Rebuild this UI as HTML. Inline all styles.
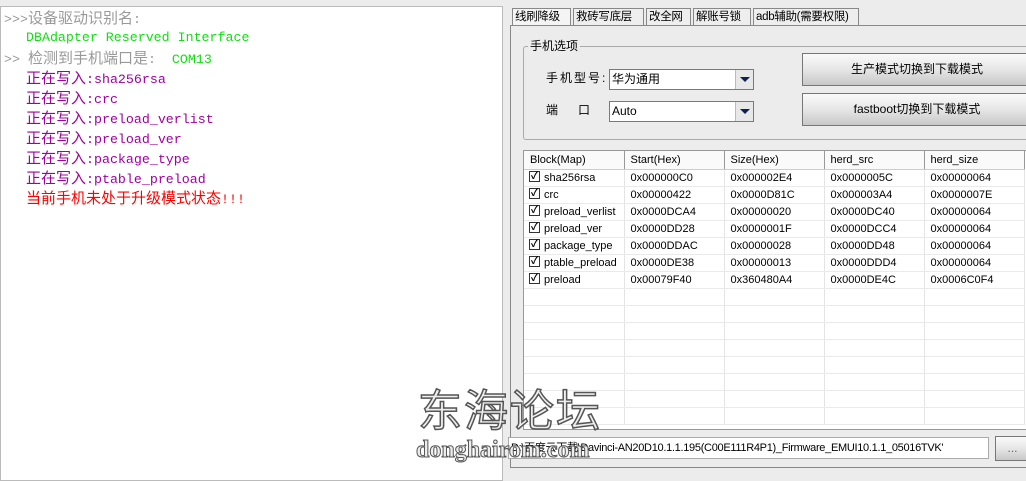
<!DOCTYPE html>
<html><head><meta charset="utf-8"><style>
*{margin:0;padding:0;box-sizing:border-box}
body{width:1026px;height:481px;overflow:hidden;background:#ececec;position:relative;font-family:"Liberation Sans","Noto Sans CJK SC",sans-serif;font-size:12px;color:#000}
.abs{position:absolute}
#left{left:0;top:6px;width:503px;height:475px;background:#fff;border:1px solid #bbb;font-family:"Liberation Mono","Noto Sans CJK SC",monospace;font-size:13.3px}
#left div{position:absolute;left:25px;white-space:pre;line-height:20px}
#left i{font-style:normal;font-size:15px;font-family:"Noto Sans CJK SC",sans-serif}
.g{color:#999}.gr{color:#10e010}.p{color:#a000a0}.r{color:#f00}
.tab{top:8px;height:18px;border:1px solid #888;border-bottom:none;background:#eee;font-size:11.5px;line-height:16px;padding:0 2px;white-space:nowrap;overflow:hidden;letter-spacing:-0.3px}
.box{border:1px solid #aaa}
.sel{height:21px;background:#fff;border:1px solid #7a7a7a;font-size:12px;line-height:19px;padding-left:2px}
.arr{position:absolute;right:0;top:0;width:18px;height:19px;background:#e8e8e8;border-left:1px solid #bbb}
.arr:after{content:"";position:absolute;left:4px;top:7px;border-left:5px solid transparent;border-right:5px solid transparent;border-top:5px solid #102050}
.btn{border:1px solid #777;background:linear-gradient(#fafafa,#e6e6e6 50%,#c8c8c8);text-align:center;font-size:12px}
table{border-collapse:collapse;font-size:11px;table-layout:fixed;width:500px}
td,th{height:17px;width:100px;font-weight:normal;text-align:left;padding-left:6px;border-right:1px solid #e4e4e4;border-bottom:1px solid #eaeaea;white-space:nowrap;overflow:hidden;line-height:16px;vertical-align:middle}
th{background:#fafafa;border-right:1px solid #999;border-bottom:1px solid #ccc;height:18px}
td:first-child{padding-left:5px}
.cb{display:inline-block;width:11px;height:11px;border:1px solid #333;vertical-align:middle;margin:-2px 4px 0 0;font-size:10px;line-height:9px;text-align:center;font-weight:bold}
</style></head><body>
<div id="left" class="abs">
<div class="g" style="top:1px;left:3px">&gt;&gt;&gt;<i>设备驱动识别名</i>:</div>
<div class="gr" style="top:21px">DBAdapter Reserved Interface</div>
<div class="g" style="top:41px;left:3px">&gt;&gt; <i>检测到手机端口是</i>:  <span class="gr">COM13</span></div>
<div class="p" style="top:61px"><i>正在写入</i>:sha256rsa</div>
<div class="p" style="top:81px"><i>正在写入</i>:crc</div>
<div class="p" style="top:101px"><i>正在写入</i>:preload_verlist</div>
<div class="p" style="top:121px"><i>正在写入</i>:preload_ver</div>
<div class="p" style="top:141px"><i>正在写入</i>:package_type</div>
<div class="p" style="top:161px"><i>正在写入</i>:ptable_preload</div>
<div class="r" style="top:181px"><i>当前手机未处于升级模式状态</i>!!!</div>
</div>

<div class="abs tab" style="left:512px;width:59px;background:#f4f4f4">线刷降级</div>
<div class="abs tab" style="left:573px;width:71px">救砖写底层</div>
<div class="abs tab" style="left:646px;width:45px">改全网</div>
<div class="abs tab" style="left:693px;width:58px">解账号锁</div>
<div class="abs tab" style="left:753px;width:106px">adb辅助(需要权限)</div>
<div class="abs" style="left:510px;top:25px;width:520px;height:443px;border:1px solid #888;border-right:none"></div>

<div class="abs box" style="left:523px;top:46px;width:510px;height:94px;border-radius:3px"></div>
<div class="abs" style="left:528px;top:37px;background:#ececec;padding:0 2px;font-size:12px">手机选项</div>
<div class="abs" style="left:546px;top:69px;font-size:12px;letter-spacing:2px">手机型号:</div>
<div class="abs sel" style="left:609px;top:69px;width:145px">华为通用<div class="arr"></div></div>
<div class="abs" style="left:546px;top:101px;font-size:12px">端&nbsp;&nbsp;&nbsp;&nbsp;&nbsp;&nbsp;口</div>
<div class="abs sel" style="left:609px;top:101px;width:145px">Auto<div class="arr"></div></div>
<div class="abs btn" style="left:802px;top:53px;width:230px;height:33px;line-height:31px">生产模式切换到下载模式</div>
<div class="abs btn" style="left:802px;top:93px;width:230px;height:33px;line-height:31px">fastboot切换到下载模式</div>

<div class="abs" style="left:523px;top:150px;width:510px;height:280px;background:#fff;border:1px solid #999;overflow:hidden">
<table>
<tr><th>Block(Map)</th><th>Start(Hex)</th><th>Size(Hex)</th><th>herd_src</th><th>herd_size</th></tr>
<tr><td><span class="cb">✓</span>sha256rsa</td><td>0x000000C0</td><td>0x000002E4</td><td>0x0000005C</td><td>0x00000064</td></tr>
<tr><td><span class="cb">✓</span>crc</td><td>0x00000422</td><td>0x0000D81C</td><td>0x000003A4</td><td>0x0000007E</td></tr>
<tr><td><span class="cb">✓</span>preload_verlist</td><td>0x0000DCA4</td><td>0x00000020</td><td>0x0000DC40</td><td>0x00000064</td></tr>
<tr><td><span class="cb">✓</span>preload_ver</td><td>0x0000DD28</td><td>0x0000001F</td><td>0x0000DCC4</td><td>0x00000064</td></tr>
<tr><td><span class="cb">✓</span>package_type</td><td>0x0000DDAC</td><td>0x00000028</td><td>0x0000DD48</td><td>0x00000064</td></tr>
<tr><td><span class="cb">✓</span>ptable_preload</td><td>0x0000DE38</td><td>0x00000013</td><td>0x0000DDD4</td><td>0x00000064</td></tr>
<tr><td><span class="cb">✓</span>preload</td><td>0x00079F40</td><td>0x360480A4</td><td>0x0000DE4C</td><td>0x0006C0F4</td></tr>
<tr><td></td><td></td><td></td><td></td><td></td></tr>
<tr><td></td><td></td><td></td><td></td><td></td></tr>
<tr><td></td><td></td><td></td><td></td><td></td></tr>
<tr><td></td><td></td><td></td><td></td><td></td></tr>
<tr><td></td><td></td><td></td><td></td><td></td></tr>
<tr><td></td><td></td><td></td><td></td><td></td></tr>
<tr><td></td><td></td><td></td><td></td><td></td></tr>
<tr><td></td><td></td><td></td><td></td><td></td></tr>
</table></div>

<div class="abs" style="left:508px;top:437px;width:481px;height:22px;background:#fff;border:1px solid #aaa;font-size:11px;line-height:20px;white-space:nowrap;overflow:hidden;padding-left:2px;letter-spacing:-0.3px">D:\百度云下载\Davinci-AN20D10.1.1.195(C00E111R4P1)_Firmware_EMUI10.1.1_05016TVK'</div>
<div class="abs btn" style="left:995px;top:436px;width:35px;height:25px;line-height:23px;color:#666">...</div>

<div class="abs" style="left:418px;top:382px;font-size:44px;color:#eee;font-family:'Noto Sans CJK SC',sans-serif;-webkit-text-stroke:1.5px #555;letter-spacing:2px;line-height:50px">东海论坛</div>
<div class="abs" style="left:416px;top:437px;font-size:24px;color:#eee;font-family:'Liberation Serif',serif;font-weight:bold;-webkit-text-stroke:1px #555;letter-spacing:0px">donghairom.com</div>
</body></html>
